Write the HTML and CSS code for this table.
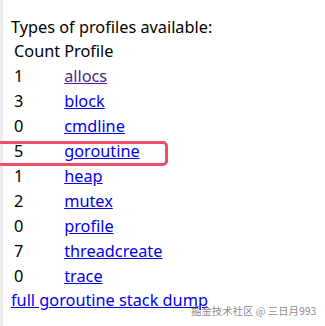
FILE: index.html
```html
<!DOCTYPE html>
<html>
<head>
<meta charset="utf-8">
<link rel="stylesheet" href="styles.css">
</head>
<body>
<div class="page">
  <div class="title">Types of profiles available:</div>
  <table class="profiles">
    <thead>
      <tr><td>Count</td><td>Profile</td></tr>
    </thead>
    <tbody>
      <tr><td>1</td><td><a class="visited" href="#">allocs</a></td></tr>
      <tr><td>3</td><td><a href="#">block</a></td></tr>
      <tr><td>0</td><td><a href="#">cmdline</a></td></tr>
      <tr><td>5</td><td><a href="#">goroutine</a></td></tr>
      <tr><td>1</td><td><a href="#">heap</a></td></tr>
      <tr><td>2</td><td><a href="#">mutex</a></td></tr>
      <tr><td>0</td><td><a href="#">profile</a></td></tr>
      <tr><td>7</td><td><a href="#">threadcreate</a></td></tr>
      <tr><td>0</td><td><a href="#">trace</a></td></tr>
    </tbody>
  </table>
  <a class="dump" href="#">full goroutine stack dump</a>
</div>
<div class="highlight"></div>
<div class="watermark">掘金技术社区 @ 三日月993</div>
</body>
</html>
```
FILE: styles.css
```css
html, body {
  margin: 0;
  padding: 0;
  background: #ffffff;
}
body {
  width: 325px;
  height: 326px;
  overflow: hidden;
  position: relative;
  font-family: "Noto Sans", "Liberation Sans", "Noto Sans CJK SC", sans-serif;
  font-size: 16.3px;
  line-height: 21px;
  color: #000000;
}
.page {
  border-left: 3px solid #ececec;
  padding: 17px 0 0 8px;
  height: 309px;
}
.title {
  margin: 0;
}
.profiles {
  border-spacing: 2px;
  margin: 0;
}
.profiles td {
  padding: 1px;
  line-height: 21px;
}
a {
  color: #0000ee;
  text-decoration: underline;
}
a.visited {
  color: #551a8b;
}
.dump {
  display: block;
  width: max-content;
}
.highlight {
  position: absolute;
  left: -6px;
  top: 141px;
  width: 168px;
  height: 19px;
  border: 3px solid #ea5068;
  border-radius: 5px;
}
.watermark {
  position: absolute;
  left: 191px;
  top: 304px;
  white-space: nowrap;
  font-family: "Noto Sans CJK SC", sans-serif;
  font-size: 10.4px;
  line-height: 14px;
  color: rgba(95, 95, 95, 0.75);
}
```
